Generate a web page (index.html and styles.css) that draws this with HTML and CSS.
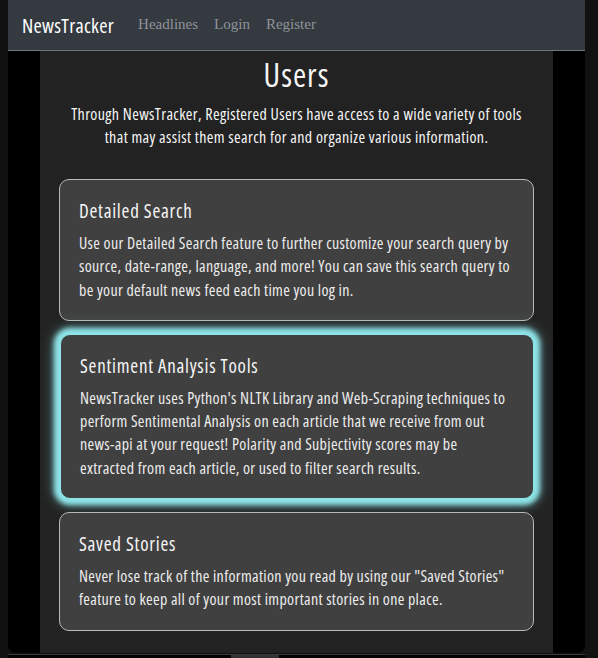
FILE: index.html
```html
<!DOCTYPE html>
<html lang="en">
<head>
<meta charset="utf-8">
<title>NewsTracker - Users</title>
<link rel="stylesheet" href="styles.css">
</head>
<body>
<div class="frame">
  <nav class="navbar">
    <a class="brand" href="#">NewsTracker</a>
    <ul class="nav-links">
      <li><a href="#">Headlines</a></li>
      <li><a href="#">Login</a></li>
      <li><a href="#">Register</a></li>
    </ul>
  </nav>
  <main class="content">
    <h1 class="title">Users</h1>
    <p class="intro">Through NewsTracker, Registered Users have access to a wide variety of tools that may assist them search for and organize various information.</p>
    <section class="card">
      <h2 class="card-title">Detailed Search</h2>
      <p class="card-text">Use our Detailed Search feature to further customize your search query by source, date-range, language, and more! You can save this search query to be your default news feed each time you log in.</p>
    </section>
    <section class="card card-glow">
      <h2 class="card-title">Sentiment Analysis Tools</h2>
      <p class="card-text">NewsTracker uses Python's NLTK Library and Web-Scraping techniques to perform Sentimental Analysis on each article that we receive from out news-api at your request! Polarity and Subjectivity scores may be extracted from each article, or used to filter search results.</p>
    </section>
    <section class="card">
      <h2 class="card-title">Saved Stories</h2>
      <p class="card-text">Never lose track of the information you read by using our "Saved Stories" feature to keep all of your most important stories in one place.</p>
    </section>
  </main>
</div>
<div class="below"><span class="below-tab"></span></div>
</body>
</html>
```

FILE: styles.css
```css
html, body {
  margin: 0;
  padding: 0;
}
body {
  background: #111111;
  font-family: "Open Sans", sans-serif;
  font-stretch: 75%;
  color: #f2f2f2;
  height: 658px;
  overflow: hidden;
}
.frame {
  margin-left: 8px;
  width: 577px;
  background: #000;
  border-radius: 0 0 8px 8px;
}
.navbar {
  display: flex;
  align-items: center;
  height: 50px;
  background: #343a40;
  border-bottom: 1px solid #6b7681;
  padding-left: 14px;
}
.brand {
  font-size: 20px;
  letter-spacing: 0.3px;
  color: #ffffff;
  text-decoration: none;
  margin-right: 16px;
}
.nav-links {
  display: flex;
  list-style: none;
  margin: 0;
  padding: 0 0 2px;
}
.nav-links a {
  display: block;
  padding: 0 8px;
  font-family: "Liberation Serif", serif;
  font-stretch: normal;
  font-size: 15px;
  color: #8f949a;
  text-decoration: none;
}
.content {
  margin: 0 32px;
  background: #222222;
  padding: 6px 19px 22px 19px;
}
.title {
  margin: 0;
  text-align: center;
  font-weight: normal;
  font-size: 32px;
  letter-spacing: 1px;
  line-height: 36px;
  color: #f5f5f5;
}
.intro {
  margin: 10px 0 30px;
  text-align: center;
  font-size: 16px;
  letter-spacing: 0.38px;
  line-height: 23px;
  color: #f6f6f6;
}
.card {
  background: #404040;
  border: 1px solid #b9b9b9;
  border-radius: 10px;
  padding: 19px 21px 18px 19px;
  margin-bottom: 13px;
}
.card:last-child {
  margin-bottom: 0;
}
.card-glow {
  border-color: #8ee4e8;
  box-shadow: 0 0 5px 6px #8ee4e8, 0 0 14px 6px rgba(142, 228, 232, 0.45);
  margin-left: 1px;
}
.card-title {
  margin: 0 0 9px;
  font-weight: normal;
  font-size: 19px;
  letter-spacing: 0.75px;
  line-height: 24px;
  color: #f5f5f5;
}
.card-text {
  margin: 0;
  font-size: 16px;
  letter-spacing: 0.33px;
  line-height: 23.3px;
  color: #ededed;
}
.below {
  margin-top: 1px;
  border-top: 1px solid #3a3a3a;
  background: #000;
  height: 10px;
  margin-left: 8px;
  width: 577px;
}
.below-tab {
  display: block;
  margin-left: 223px;
  width: 48px;
  height: 10px;
  background: #333;
}
```
